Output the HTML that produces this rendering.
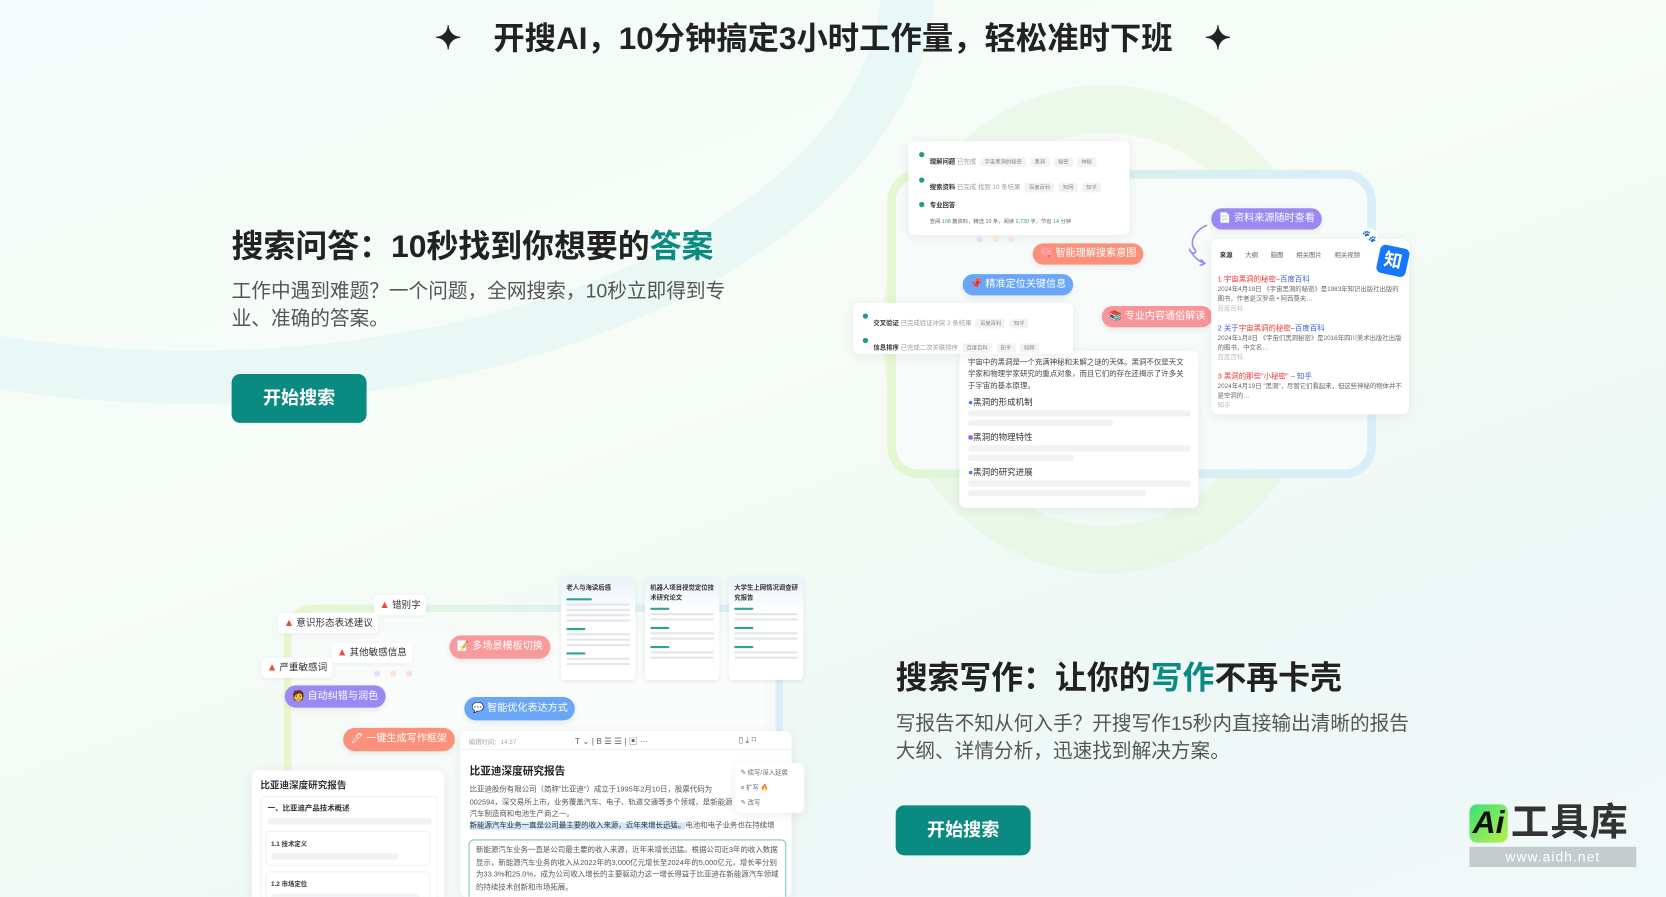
<!DOCTYPE html>
<html><head><meta charset="utf-8"><style>
*{box-sizing:border-box;margin:0;padding:0}
html,body{width:1666px;height:897px;overflow:hidden}
body{font-family:"Liberation Sans","Noto Sans CJK SC",sans-serif;background:#f4faf8}
#w{position:absolute;left:0;top:0;width:1568px;height:844px;transform:scale(1.0625);transform-origin:0 0;overflow:hidden;
background:linear-gradient(160deg,#f2fbfa 0%,#f7fcf6 40%,#eef8f5 70%,#f0f9f9 100%)}
.a{position:absolute}
.arc{position:absolute;border-radius:50%}
.pill{position:absolute;border-radius:12px;color:#fff;font-size:9.5px;line-height:20px;padding:0 7px;white-space:nowrap;box-shadow:0 2px 6px rgba(0,0,0,.08)}
.card{position:absolute;background:#fff;border-radius:6px;box-shadow:0 2px 10px rgba(0,0,0,.07)}
.t{font-size:6px;color:#999;white-space:nowrap}
.b{font-size:6px;color:#333;font-weight:bold}
.tag{display:inline-block;background:#f2f3f5;padding:1px 4px;border-radius:2px;margin-left:4px;font-size:5px;color:#888}
.bar{position:absolute;height:6px;background:#f0f2f4;border-radius:3px}
.dot{position:absolute;width:6px;height:6px;border-radius:50%;background:#1f9c8f}
.btn{position:absolute;background:#0b8a82;color:#fff;font-size:17px;font-weight:bold;border-radius:8px;text-align:center}
.h{position:absolute;font-size:30px;font-weight:bold;color:#222;white-space:nowrap}
.p{position:absolute;font-size:18.5px;color:#555;line-height:26px;white-space:nowrap}
.warn{position:absolute;background:#fff;border-radius:4px;font-size:9px;color:#333;padding:0 5px;line-height:19px;box-shadow:0 1px 4px rgba(0,0,0,.06);white-space:nowrap}
.warn i{color:#e94a3a;font-style:normal;font-size:10px;margin-right:2px}
.tc{position:absolute;width:70px;height:97px;background:linear-gradient(180deg,#e8f3fb,#fff 35%);border-radius:4px;box-shadow:0 1px 5px rgba(0,0,0,.07);padding:5px;font-size:6px;font-weight:bold;color:#333}
.ln{height:2px;background:#e3e6ea;margin-top:3px;border-radius:1px}
</style></head><body><div id="w">
<!-- background arcs -->
<div class="arc" style="left:-520px;top:-420px;width:1400px;height:800px;border:50px solid rgba(205,238,243,.32);border-radius:50%"></div>
<div class="arc" style="left:830px;top:80px;width:420px;height:460px;border:45px solid rgba(225,245,218,.45)"></div>

<div class="a" style="left:0;top:13px;width:1568px;text-align:center;font-size:29.5px;font-weight:bold;color:#222;white-space:nowrap"><span style="font-size:30px;margin-right:30px">✦</span>开搜AI，10分钟搞定3小时工作量，轻松准时下班<span style="font-size:30px;margin-left:30px">✦</span></div>

<div class="h" style="left:218px;top:207px">搜索问答：10秒找到你想要的<span style="color:#0b8a82">答案</span></div>
<div class="p" style="left:218px;top:261px">工作中遇到难题？一个问题，全网搜索，10秒立即得到专<br>业、准确的答案。</div>
<div class="btn" style="left:218px;top:352px;width:127px;height:46px;line-height:46px">开始搜索</div>

<!-- top-right mockup -->
<div class="a" style="left:835px;top:160px;width:460px;height:290px;border-radius:30px;border:8px solid transparent;background:linear-gradient(#f7fbf9,#f7fbf9) padding-box,linear-gradient(90deg,#e4f7cf,#d6f0ef,#d9eefa) border-box"></div>
<div class="card" style="left:855px;top:133px;width:208px;height:88px">
 <div class="dot" style="left:10px;top:10px;width:5px;height:5px"></div><div class="a" style="left:20px;top:8px"><span class="b">理解问题</span><span class="t"> 已完成</span><span class="tag">宇宙黑洞的秘密</span><span class="tag">黑洞</span><span class="tag">秘密</span><span class="tag">神秘</span></div>
 <div class="dot" style="left:10px;top:34px;width:5px;height:5px"></div><div class="a" style="left:20px;top:32px"><span class="b">搜索资料</span><span class="t"> 已完成 找到 10 条结果</span><span class="tag">百度百科</span><span class="tag">知网</span><span class="tag">知乎</span></div>
 <div class="dot" style="left:10px;top:57px;width:5px;height:5px"></div><div class="a b" style="left:20px;top:55px">专业回答</div>
 <div class="a t" style="left:20px;top:72px;color:#666;font-size:5px">查阅 <span style="color:#1f9c8f">108</span> 篇资料，精选 10 条，阅读 <span style="color:#1f9c8f">2,730</span> 字，节省 <span style="color:#1f9c8f">14</span> 分钟</div>
</div>
<div class="arc" style="left:919px;top:222px;width:6px;height:6px;background:#e4e0fb"></div>
<div class="arc" style="left:934px;top:222px;width:6px;height:6px;background:#fbe6d4"></div>
<div class="arc" style="left:949px;top:222px;width:6px;height:6px;background:#fbe0e0"></div>
<div class="card" style="left:903px;top:330px;width:225px;height:148px;padding:6px 8px;font-size:7px;color:#444;line-height:11px">
 宇宙中的黑洞是一个充满神秘和未解之谜的天体。黑洞不仅是天文学家和物理学家研究的重点对象，而且它们的存在还揭示了许多关于宇宙的基本原理。
 <div class="a" style="left:8px;top:43px;font-size:8px;color:#333"><span style="color:#4a7cf0">●</span>黑洞的形成机制</div>
 <div class="bar" style="left:8px;top:56px;width:210px"></div><div class="bar" style="left:8px;top:65px;width:137px"></div>
 <div class="a" style="left:8px;top:76px;font-size:8px;color:#333"><span style="color:#a45ad8">■</span>黑洞的物理特性</div>
 <div class="bar" style="left:8px;top:89px;width:210px"></div><div class="bar" style="left:8px;top:98px;width:100px"></div>
 <div class="a" style="left:8px;top:109px;font-size:8px;color:#333"><span style="color:#4a7cf0">●</span>黑洞的研究进展</div>
 <div class="bar" style="left:8px;top:122px;width:210px"></div><div class="bar" style="left:8px;top:131px;width:168px"></div>
</div>
<div class="card" style="left:803px;top:285px;width:207px;height:48px">
 <div class="dot" style="left:9px;top:10px;width:5px;height:5px"></div><div class="a" style="left:19px;top:8px"><span class="b">交叉验证</span><span class="t"> 已完成验证冲突 2 条结果</span><span class="tag">百度百科</span><span class="tag">知乎</span></div>
 <div class="dot" style="left:9px;top:33px;width:5px;height:5px"></div><div class="a" style="left:19px;top:31px"><span class="b">信息排序</span><span class="t"> 已完成二次关联排序</span><span class="tag">百度百科</span><span class="tag">知乎</span><span class="tag">知网</span></div>
</div>
<div class="pill" style="left:972px;top:229px;background:#fb907b">🧠 智能理解搜索意图</div>
<div class="pill" style="left:906px;top:258px;background:#6aa6f7">📌 精准定位关键信息</div>
<div class="pill" style="left:1037px;top:288px;background:#f7959a">📚 专业内容通俗解读</div>
<div class="pill" style="left:1140px;top:196px;background:#9c88f4">📄 资料来源随时查看</div>
<svg class="a" style="left:1112px;top:210px" width="28" height="42" viewBox="0 0 28 42"><path d="M24 2 C10 8 8 20 12 24 C16 28 10 30 8 26 C6 20 10 34 22 38" fill="none" stroke="#9c88f4" stroke-width="1.5"/><path d="M18 34 L22 38 L17 40" fill="none" stroke="#9c88f4" stroke-width="1.5"/></svg>
<div class="card" style="left:1140px;top:225px;width:186px;height:165px;font-size:6px;color:#666">
 <div class="a" style="left:8px;top:10px;white-space:nowrap"><b style="color:#333">来源</b>　　大纲　　脑图　　相关图片　　相关视频</div>
 <div class="a" style="left:6px;top:34px;width:175px;line-height:9px"><span style="color:#e33;font-size:7px">1 宇宙黑洞的秘密–<span style="color:#3a5fd9">百度百科</span></span><br>2024年4月19日 《宇宙黑洞的秘密》是1983年知识出版社出版的图书，作者是汉罗岳 • 阿西莫夫…<br><span style="color:#bbb">百度百科</span></div>
 <div class="a" style="left:6px;top:80px;width:175px;line-height:9px"><span style="color:#3a5fd9;font-size:7px">2 关于<span style="color:#e33">宇宙黑洞的秘密</span>–百度百科</span><br>2024年1月8日 《宇宙们黑洞秘密》是2016年四川美术出版社出版的图书，中文名…<br><span style="color:#bbb">百度百科</span></div>
 <div class="a" style="left:6px;top:125px;width:175px;line-height:9px"><span style="color:#e33;font-size:7px">3 黑洞的那些"小秘密" – <span style="color:#3a5fd9">知乎</span></span><br>2024年4月19日 "黑洞"，尽管它们看起来，但这些神秘的物体并不是空洞的…<br><span style="color:#bbb">知乎</span></div>
</div>
<div class="a" style="left:1281px;top:215px;width:16px;height:16px;border-radius:50%;background:#fff;color:#2a5cf2;font-size:11px;text-align:center;line-height:16px">🐾</div>
<div class="a" style="left:1297px;top:232px;width:28px;height:27px;background:#1677ff;color:#fff;font-size:17px;font-weight:bold;border-radius:5px;text-align:center;line-height:27px;transform:rotate(12deg)">知</div>

<!-- bottom-left mockup -->
<div class="a" style="left:267px;top:569px;width:470px;height:300px;border-radius:28px;border:7px solid transparent;background:linear-gradient(#f6fbf8,#f6fbf8) padding-box,linear-gradient(90deg,#e6f7cf,#dcf3ef,#d9eefa) border-box"></div>
<div class="a" style="left:340px;top:595px;width:380px;height:100px;background:#fafcfb;border-radius:8px"></div>
<div class="arc" style="left:352px;top:631px;width:6px;height:6px;background:#e4e0fb"></div>
<div class="arc" style="left:367px;top:631px;width:6px;height:6px;background:#fbe6d4"></div>
<div class="arc" style="left:382px;top:631px;width:6px;height:6px;background:#fbe0e0"></div>
<div class="warn" style="left:352px;top:560px"><i>▲</i>错别字</div>
<div class="warn" style="left:262px;top:577px"><i>▲</i>意识形态表述建议</div>
<div class="warn" style="left:312px;top:605px"><i>▲</i>其他敏感信息</div>
<div class="warn" style="left:246px;top:619px"><i>▲</i>严重敏感词</div>
<div class="tc" style="left:528px;top:543px">老人与海读后感<div class="ln" style="width:40%;background:#2fa09a;margin-top:6px"></div><div class="ln"></div><div class="ln"></div><div class="ln"></div><div class="ln"></div><div class="ln" style="width:30%;background:#2fa09a;margin-top:6px"></div><div class="ln"></div><div class="ln"></div><div class="ln"></div><div class="ln" style="width:30%;background:#2fa09a;margin-top:6px"></div><div class="ln"></div><div class="ln"></div></div>
<div class="tc" style="left:607px;top:543px">机器人项目视觉定位技术研究论文<div class="ln" style="width:30%;background:#2fa09a;margin-top:6px"></div><div class="ln"></div><div class="ln"></div><div class="ln" style="width:30%;background:#2fa09a;margin-top:6px"></div><div class="ln"></div><div class="ln"></div><div class="ln" style="width:30%;background:#2fa09a;margin-top:6px"></div><div class="ln"></div><div class="ln"></div></div>
<div class="tc" style="left:686px;top:543px">大学生上网情况调查研究报告<div class="ln" style="width:30%;background:#2fa09a;margin-top:6px"></div><div class="ln"></div><div class="ln"></div><div class="ln" style="width:30%;background:#2fa09a;margin-top:6px"></div><div class="ln"></div><div class="ln"></div><div class="ln" style="width:30%;background:#2fa09a;margin-top:6px"></div><div class="ln"></div><div class="ln"></div></div>
<div class="pill" style="left:423px;top:598px;background:#f89a9c;line-height:22px">📝 多场景模板切换</div>
<div class="pill" style="left:268px;top:645px;background:#9c88f4;line-height:21px">🧑 自动纠错与润色</div>
<div class="pill" style="left:437px;top:656px;background:#6aa6f7;line-height:22px">💬 智能优化表达方式</div>
<div class="pill" style="left:323px;top:685px;background:#fb907b;line-height:22px">🖊 一键生成写作框架</div>
<div class="card" style="left:433px;top:688px;width:312px;height:156px">
 <div class="a t" style="left:8px;top:5px;font-size:6px;color:#aaa">编辑时间：14:37</div>
 <div class="a t" style="left:108px;top:4px;font-size:8px;color:#666">T ⌄ | B ☰ ☰ | ▣ ···</div>
 <div class="a t" style="left:262px;top:4px;font-size:8px;color:#666">▯ ⤓ ⌑</div>
 <div class="a" style="left:0;top:17px;width:312px;height:1px;background:#f0f0f0"></div>
 <div class="a" style="left:9px;top:29px;font-size:10px;font-weight:bold;color:#222">比亚迪深度研究报告</div>
 <div class="a" style="left:9px;top:50px;width:250px;font-size:7px;color:#555;line-height:11.5px">比亚迪股份有限公司（简称"比亚迪"）成立于1995年2月10日，股票代码为002594，深交易所上市，业务覆盖汽车、电子、轨道交通等多个领域，是新能源汽车制造商和电池生产商之一。</div>
 <div class="a" style="left:9px;top:84px;width:298px;font-size:7px;color:#555;white-space:nowrap"><span style="background:#d5e6fb;color:#234">新能源汽车业务一直是公司最主要的收入来源，近年来增长迅猛。</span>电池和电子业务也在持续增</div>
</div>
<div class="card" style="left:692px;top:718px;width:65px;height:47px;font-size:6px;color:#666;line-height:14px;padding:3px 5px">✎ 续写/深入延展<br>≡ 扩写 <span style="color:#f80">🔥</span><br>✎ 改写</div>
<div class="a" style="left:441px;top:790px;width:299px;height:60px;background:#fff;border:1px solid #7cc8be;border-radius:5px;padding:4px 6px;font-size:7px;color:#555;line-height:11.5px">新能源汽车业务一直是公司最主要的收入来源，近年来增长迅猛。根据公司近3年的收入数据显示，新能源汽车业务的收入从2022年的3,000亿元增长至2024年的5,000亿元，增长率分别为33.3%和25.0%，成为公司收入增长的主要驱动力这一增长得益于比亚迪在新能源汽车领域的持续技术创新和市场拓展。</div>
<div class="card" style="left:237px;top:725px;width:181px;height:130px">
 <div class="a" style="left:8px;top:7px;font-size:9px;font-weight:bold;color:#333">比亚迪深度研究报告</div>
 <div class="a" style="left:8px;top:24px;width:167px;height:110px;border:1px solid #eef0f2;border-radius:4px">
  <div class="a" style="left:6px;top:6px;font-size:7px;font-weight:bold;color:#333">一、比亚迪产品技术概述</div>
  <div class="bar" style="left:6px;top:20px;width:154px"></div>
  <div class="a" style="left:4px;top:32px;width:155px;height:33px;border:1px solid #eef0f2;border-radius:4px"><div class="a" style="left:4px;top:6px;font-size:6px;color:#333;font-weight:bold">1.1 技术定义</div><div class="bar" style="left:4px;top:20px;width:120px"></div></div>
  <div class="a" style="left:4px;top:70px;width:155px;height:40px;border:1px solid #eef0f2;border-radius:4px"><div class="a" style="left:4px;top:6px;font-size:6px;color:#333;font-weight:bold">1.2 市场定位</div><div class="bar" style="left:4px;top:20px;width:140px"></div></div>
 </div>
</div>

<div class="h" style="left:843px;top:613px">搜索写作：让你的<span style="color:#0b8a82">写作</span>不再卡壳</div>
<div class="p" style="left:843px;top:668px">写报告不知从何入手？开搜写作15秒内直接输出清晰的报告<br>大纲、详情分析，迅速找到解决方案。</div>
<div class="btn" style="left:843px;top:758px;width:127px;height:47px;line-height:47px">开始搜索</div>

<!-- logo -->
<div class="a" style="left:1383px;top:757px;width:36px;height:36px;border-radius:7px;background:linear-gradient(135deg,#3be07a,#b8f04a);color:#111;font-size:30px;font-weight:bold;line-height:36px;text-align:center;font-style:italic">Ai</div>
<div class="a" style="left:1422px;top:752px;font-size:36px;font-weight:bold;color:#333;line-height:44px;letter-spacing:1px">工具库</div>
<div class="a" style="left:1383px;top:797px;width:157px;height:19px;background:rgba(160,165,170,.55);color:#fff;font-size:13px;line-height:19px;text-align:center;letter-spacing:1px">www.aidh.net</div>
</div></body></html>
